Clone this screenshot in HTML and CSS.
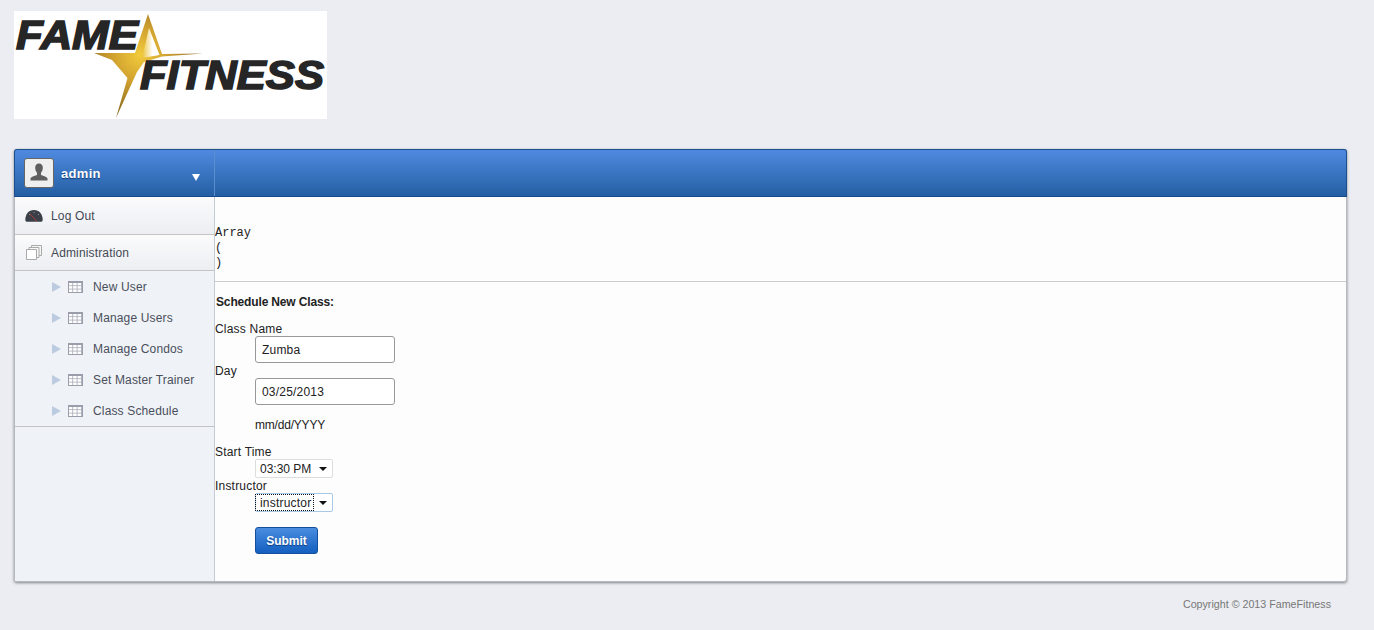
FILE: index.html
```html
<!DOCTYPE html>
<html>
<head>
<meta charset="UTF-8"/>
<title>Fame Fitness</title>
<link rel="stylesheet" href="styles.css">
</head>
<body>
<div class="logo">
  <svg width="313" height="108" viewBox="0 0 313 108">
    <defs>
      <radialGradient id="gold" gradientUnits="userSpaceOnUse" cx="126" cy="44" r="62">
        <stop offset="0" stop-color="#f2cb3c"/>
        <stop offset="0.45" stop-color="#cfa02f"/>
        <stop offset="1" stop-color="#8a6a20"/>
      </radialGradient>
      <linearGradient id="fade" x1="0" y1="0" x2="1" y2="0">
        <stop offset="0" stop-color="#ebc137"/>
        <stop offset="0.6" stop-color="#fff"/>
      </linearGradient>
    </defs>
    <polygon fill="url(#gold)" points="134,3 148,43 189,42.500 148,45.500 130,51 123,61 102,107 113.500,67 98,49 80,42 121,42"/>
    <polygon fill="url(#fade)" points="135,17 145.500,44 128,47"/>
    <text class="logo-word" x="2" y="38" textLength="122" lengthAdjust="spacingAndGlyphs">FAME</text>
    <text class="logo-word" x="126" y="78" textLength="184" lengthAdjust="spacingAndGlyphs">FITNESS</text>
  </svg>
</div>

<div class="panel">
  <div class="panel-head">
    <div class="user">
      <div class="avatar">
        <svg width="22" height="22" viewBox="0 0 22 22"><path fill="#5f5f5f" d="M11 1.500c2.500 0 3.800 1.800 3.800 4.200 0 2.200-.8 4-1.800 5v2.300c1.600.8 5.800 1.500 6.500 3.500v2H2.500v-2c.7-2 4.900-2.700 6.500-3.500v-2.300c-1-1-1.800-2.800-1.800-5 0-2.400 1.300-4.200 3.800-4.200z"/></svg>
      </div>
      <span class="user-name">admin</span>
      <span class="user-arrow"></span>
    </div>
  </div>
  <div class="panel-body">
    <div class="sidebar">
      <a class="menu-top" href="#">
        <svg class="menu-icon" width="18" height="14" viewBox="0 0 18 14"><path fill="#3b3f47" d="M.3 11C.3 5 3.800 1 9 1s8.700 4 8.700 10c0 1-.9 1.800-2 1.800H2.300C1.200 12.800.3 12 .3 11z"/><path fill="#8b8f98" d="M4 5h1v1H4zM8.500 3h1v1h-1zM13 5h1v1h-1z"/><path stroke="#c9383a" stroke-width=".8" fill="none" d="M5 5l6.500 7"/></svg>
        Log Out
      </a>
      <a class="menu-top" href="#">
        <svg class="menu-icon" width="18" height="17" viewBox="0 0 18 17"><path fill="#f4f4f4" stroke="#aaa" d="M6.500 1.500h10v10h-10z"/><path fill="#f7f7f7" stroke="#aaa" d="M4 3.500h10v10H4z"/><path fill="#fff" stroke="#aaa" d="M1.500 5.500h10v10h-10z"/></svg>
        Administration
      </a>
      <ul class="submenu">
        <li><span class="sub-arrow"></span><span class="grid-icon"></span>New User</li>
        <li><span class="sub-arrow"></span><span class="grid-icon"></span>Manage Users</li>
        <li><span class="sub-arrow"></span><span class="grid-icon"></span>Manage Condos</li>
        <li><span class="sub-arrow"></span><span class="grid-icon"></span>Set Master Trainer</li>
        <li><span class="sub-arrow"></span><span class="grid-icon"></span>Class Schedule</li>
      </ul>
    </div>
    <div class="main">
      <pre class="dump">Array
(
)</pre>
      <div class="rule"></div>
      <div class="form-title">Schedule New Class:</div>
      <div class="form-label first">Class Name</div>
      <div class="form-control"><input class="text-input" type="text" value="Zumba"></div>
      <div class="form-label">Day</div>
      <div class="form-control"><input class="text-input" type="text" value="03/25/2013"></div>
      <div class="form-hint">mm/dd/YYYY</div>
      <div class="form-label">Start Time</div>
      <div class="form-control"><div class="select"><span>03:30 PM</span></div></div>
      <div class="form-label">Instructor</div>
      <div class="form-control"><div class="select focus"><span>instructor</span></div></div>
      <div class="form-control"><button class="submit" type="button">Submit</button></div>
    </div>
  </div>
</div>
<div class="footer">Copyright © 2013 FameFitness</div>
</body>
</html>
```

FILE: styles.css
```css
*{margin:0;padding:0;box-sizing:border-box}
html,body{height:100%;overflow:hidden;}
body{background:#ebedf2; font-family:"Liberation Sans",Arial,sans-serif; font-size:12px; color:#222;}

.logo{margin:11px 0 0 14px; width:313px; height:108px; background:#fff;}
.logo svg{display:block;}
.logo-word{font-family:"Liberation Sans",sans-serif; font-weight:bold; font-style:italic; font-size:41px; fill:#262626; stroke:#262626; stroke-width:1.6px;}

.panel{margin:30px 0 0 14px; width:1333px; height:433px; border:1px solid #b5bac0; border-top:0; border-radius:3px; background:#fdfdfd; box-shadow:0 1px 3px rgba(0,0,0,.45);}
.panel-head{height:48px; background:linear-gradient(#4f8ae0,#245fa3); border:1px solid #1d4f8f; border-bottom-color:#174a8a; margin:0 -1px; border-radius:3px 3px 0 0;}
.user{display:flex; align-items:center; width:200px; height:46px; padding-left:9px; border-right:1px solid #5c8dcc; position:relative;}
.avatar{display:flex; align-items:center; justify-content:center; width:30px; height:30px; background:#efefef; border:1px solid #666; border-radius:3px;}
.user-name{margin-left:7px; color:#fff; font-size:13px; font-weight:bold; letter-spacing:.3px; text-shadow:0 1px 1px #123a70;}
.user-arrow{position:absolute; left:177px; top:24px; border-style:solid; border-width:7px 4px 0 4px; border-color:#fff transparent transparent transparent;}

.panel-body{display:flex; height:384px;}
.sidebar{flex:none; width:200px; background:#eff2f6; border-right:1px solid #c3ccd6; letter-spacing:.15px;}
.menu-top{display:flex; align-items:center; height:38px; padding-left:10px; color:#444a55; text-decoration:none; background:linear-gradient(#fbfbfc,#eceef2); border-bottom:1px solid #c4c4c4;}
.menu-top + .menu-top{height:36px;}
.menu-icon{flex:none; margin-right:8px;}
.submenu{list-style:none; border-bottom:1px solid #c4c4c4; height:156px;}
.submenu li{display:flex; align-items:center; height:31px; padding-left:37px; color:#4a4f5c;}
.sub-arrow{flex:none; margin-right:7px; border-style:solid; border-width:5.500px 0 5.500px 9px; border-color:transparent transparent transparent #bccbe0;}
.grid-icon{flex:none; width:15px; height:12px; margin-right:10px; border:1px solid #9a9eaa; border-top-width:2px; background-color:#fff; background-image:linear-gradient(#a9adb8 1px,transparent 1px),linear-gradient(90deg,#a9adb8 1px,transparent 1px); background-size:4.330px 3.330px; background-position:-1px -1px;}

.main{flex:1; padding-top:28px;}
.dump{font-family:"Liberation Mono","Courier New",monospace; font-size:12px; line-height:15px; height:45px; padding-top:1px; color:#222;}
.rule{height:1px; margin-top:11px; background:#ccc;}
.form-title{height:15px; margin:12px 0 0 1px; line-height:17px; font-weight:bold; letter-spacing:-.15px;}
.form-label{height:15px; line-height:17px; letter-spacing:.2px;}
.form-label.first{margin-top:12px;}
.form-control{margin-left:40px;}
.form-hint{height:15px; margin:12px 0 12px 40px; line-height:17px; letter-spacing:-.2px;}
.text-input{display:block; width:140px; height:27px; padding:0 6px; font:12px "Liberation Sans",Arial,sans-serif; letter-spacing:.2px; color:#222; background:#fff; border:1px solid #999; border-radius:3px;}
.select{position:relative; width:78px; height:19px; padding:2px 0 0 4px; line-height:15px; background:#fff; border:1px solid #ddd; border-radius:2px; font-size:12px;}
.select::after{content:""; position:absolute; right:5px; top:7px; border-style:solid; border-width:4px 4px 0 4px; border-color:#111 transparent transparent transparent;}
.select.focus{border-color:#a9c8e6; letter-spacing:.2px; padding-top:1px;}
.select.focus span{display:inline-block; margin-left:-4px; padding:1px 2px 0 4px; outline:1px dotted #111; height:15px; line-height:15px;}
.submit{display:block; width:63px; height:27px; margin-top:15px; font:bold 12px "Liberation Sans",Arial,sans-serif; color:#fff; background:linear-gradient(#4a8de0,#145fc0); border:1px solid #134f9c; border-radius:3px; text-shadow:0 1px 1px #0e3f80;}

.footer{width:1331px; margin-top:16px; text-align:right; font-size:10.700px; line-height:12px; color:#777;}
```
